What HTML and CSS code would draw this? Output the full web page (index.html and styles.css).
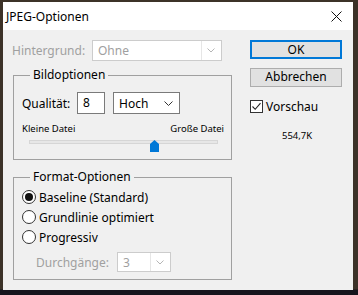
FILE: index.html
```html
<!DOCTYPE html>
<html lang="de">
<head>
    <meta charset="UTF-8">
    <title>JPEG-Optionen</title>
    <link rel="stylesheet" href="styles.css">
</head>
<body>

<div class="window">
    <div class="titlebar">
        <span class="title">JPEG-Optionen</span>
        <svg class="close" width="11" height="11" viewBox="0 0 11 11">
            <path d="M0.5 0.5 L10.5 10.5 M10.5 0.5 L0.5 10.5" stroke="#111" stroke-width="1"/>
        </svg>
    </div>

    <div class="main">
        <!-- left column -->
        <div class="left">
            <div class="row-bg">
                <span class="label disabled">Hintergrund:</span>
                <div class="select select-bg disabled-select">
                    <span class="value">Ohne</span>
                    <span class="sep"></span>
                    <svg class="chev" width="8" height="5" viewBox="0 0 8 5"><path d="M0.5 0.5 L4 4 L7.5 0.5" fill="none" stroke="#b5b5b5"/></svg>
                </div>
            </div>

            <fieldset class="group group-bild">
                <legend>Bildoptionen</legend>
                <div class="quality-row">
                    <span class="label q-label">Qualität:</span>
                    <div class="input q-input">8</div>
                    <div class="select q-select">
                        <span class="value">Hoch</span>
                        <svg class="chev" width="9" height="5" viewBox="0 0 9 5"><path d="M0.5 0.5 L4.5 4.5 L8.5 0.5" fill="none" stroke="#333"/></svg>
                    </div>
                </div>
                <div class="size-row">
                    <span>Kleine Datei</span>
                    <span>Große Datei</span>
                </div>
                <div class="slider">
                    <div class="track"></div>
                    <svg class="thumb" width="9" height="12" viewBox="0 0 9 12">
                        <path d="M0 4 L4.5 0 L9 4 L9 12 L0 12 Z" fill="#0078d7"/>
                    </svg>
                </div>
            </fieldset>

            <fieldset class="group group-format">
                <legend>Format-Optionen</legend>
                <div class="radios">
                    <div class="radio-row">
                        <span class="radio checked"></span>
                        <span>Baseline (Standard)</span>
                    </div>
                    <div class="radio-row">
                        <span class="radio"></span>
                        <span>Grundlinie optimiert</span>
                    </div>
                    <div class="radio-row">
                        <span class="radio"></span>
                        <span>Progressiv</span>
                    </div>
                </div>
                <div class="passes-row">
                    <span class="label disabled passes-label">Durchgänge:</span>
                    <div class="select passes-select disabled-select">
                        <span class="value">3</span>
                        <span class="sep"></span>
                        <svg class="chev" width="8" height="5" viewBox="0 0 8 5"><path d="M0.5 0.5 L4 4 L7.5 0.5" fill="none" stroke="#b5b5b5"/></svg>
                    </div>
                </div>
            </fieldset>
        </div>

        <!-- right column -->
        <div class="right">
            <div class="btn btn-ok">OK</div>
            <div class="btn btn-cancel">Abbrechen</div>
            <div class="check-row">
                <span class="checkbox">
                    <svg width="11" height="11" viewBox="0 0 11 11"><path d="M1.5 5.5 L4.2 8.3 L9.5 2.2" fill="none" stroke="#222" stroke-width="1.1"/></svg>
                </span>
                <span>Vorschau</span>
            </div>
            <div class="filesize">554,7K</div>
        </div>
    </div>
</div>

</body>
</html>
```

FILE: styles.css
```css
body {
    margin: 0;
    padding: 0;
    width: 358px;
    height: 295px;
    overflow: hidden;
    font-family: 'Noto Sans', 'Open Sans', sans-serif;
    font-size: 12px;
    color: #000;
    background: linear-gradient(to bottom, #3c3228 0, #3c3228 289px, #16141c 290px, #16141c 100%);
}
.window {
    margin: 2px 0 0 3px;
    width: 350px;
    height: 288px;
    background-color: #f0f0f0;
}
.titlebar {
    height: 28px;
    background-color: #fff;
    display: flex;
    align-items: center;
    justify-content: space-between;
    padding: 0 11px 0 3px;
}
.title {
    font-size: 12px;
}
.main {
    display: flex;
    padding-top: 10px;
}
.left {
    margin-left: 9px;
    width: 220px;
}
.right {
    margin-left: 18px;
    width: 92px;
}
.label {
    white-space: nowrap;
}
.disabled {
    color: #a0a0a0;
}
.row-bg {
    display: flex;
    align-items: center;
    height: 21px;
}
.row-bg .label {
    width: 80px;
}
.select {
    display: flex;
    align-items: center;
    box-sizing: border-box;
    background-color: #fff;
    border: 1px solid #7a7a7a;
    padding-left: 5px;
}
.select .value {
    flex: 1;
}
.disabled-select {
    border-color: #cccccc;
    color: #a0a0a0;
}
.sep {
    width: 1px;
    align-self: stretch;
    background-color: #e6e6e6;
    margin-right: 5px;
}
.chev {
    margin-right: 6px;
}
.select-bg {
    width: 130px;
    height: 21px;
}
.group {
    box-sizing: border-box;
    margin: 0 0 0 1px;
    padding: 0;
    width: 219px;
    border: 1px solid #a0a0a0;
}
.group legend {
    margin-left: 16px;
    padding: 0 3px;
    line-height: 16px;
}
.group-bild {
    margin-top: 6px;
    height: 93px;
}
.group-format {
    margin-top: 9px;
    height: 111px;
}
.quality-row {
    display: flex;
    align-items: center;
    height: 22px;
    margin-top: 9px;
    padding-left: 8px;
}
.q-label {
    width: 55px;
}
.input {
    box-sizing: border-box;
    background-color: #fff;
    border: 1px solid #7a7a7a;
    padding-left: 5px;
    line-height: 20px;
}
.q-input {
    width: 28px;
    height: 22px;
    margin-right: 8px;
}
.q-select {
    width: 67px;
    height: 22px;
}
.size-row {
    display: flex;
    justify-content: space-between;
    font-size: 9.5px;
    line-height: 14px;
    height: 14px;
    margin-top: 8px;
    padding: 0 7px 0 8px;
}
.slider {
    position: relative;
    height: 12px;
    margin: 3px 0 0 15px;
    width: 189px;
}
.track {
    box-sizing: border-box;
    height: 4px;
    margin-top: 4px;
    background-color: #e7e7e7;
    border: 1px solid #d6d6d6;
}
.thumb {
    position: absolute;
    left: 121px;
    top: 0;
}
.radios {
    padding: 2px 0 0 8px;
}
.radio-row {
    display: flex;
    align-items: center;
    height: 20px;
    gap: 3px;
}
.radio {
    box-sizing: border-box;
    width: 14px;
    height: 14px;
    border: 1px solid #333;
    border-radius: 50%;
    background-color: #fff;
    display: flex;
    align-items: center;
    justify-content: center;
}
.radio.checked::after {
    content: "";
    width: 8px;
    height: 8px;
    border-radius: 50%;
    background-color: #111;
}
.passes-row {
    display: flex;
    align-items: center;
    margin-top: 5px;
    padding-left: 22px;
}
.passes-label {
    width: 81px;
}
.passes-select {
    width: 54px;
    height: 20px;
}
.btn {
    box-sizing: border-box;
    height: 19px;
    background-color: #e1e1e1;
    border: 1px solid #adadad;
    text-align: center;
    line-height: 16px;
}
.btn-ok {
    border: 2px solid #0078d7;
    line-height: 15px;
}
.btn-cancel {
    margin-top: 9px;
}
.check-row {
    display: flex;
    align-items: center;
    gap: 3px;
    height: 14px;
    margin-top: 12px;
}
.checkbox {
    box-sizing: border-box;
    width: 13px;
    height: 13px;
    border: 1px solid #333;
    background-color: #fff;
    display: flex;
}
.filesize {
    font-size: 9.5px;
    line-height: 12px;
    margin-top: 17px;
    padding-left: 32px;
}
```
